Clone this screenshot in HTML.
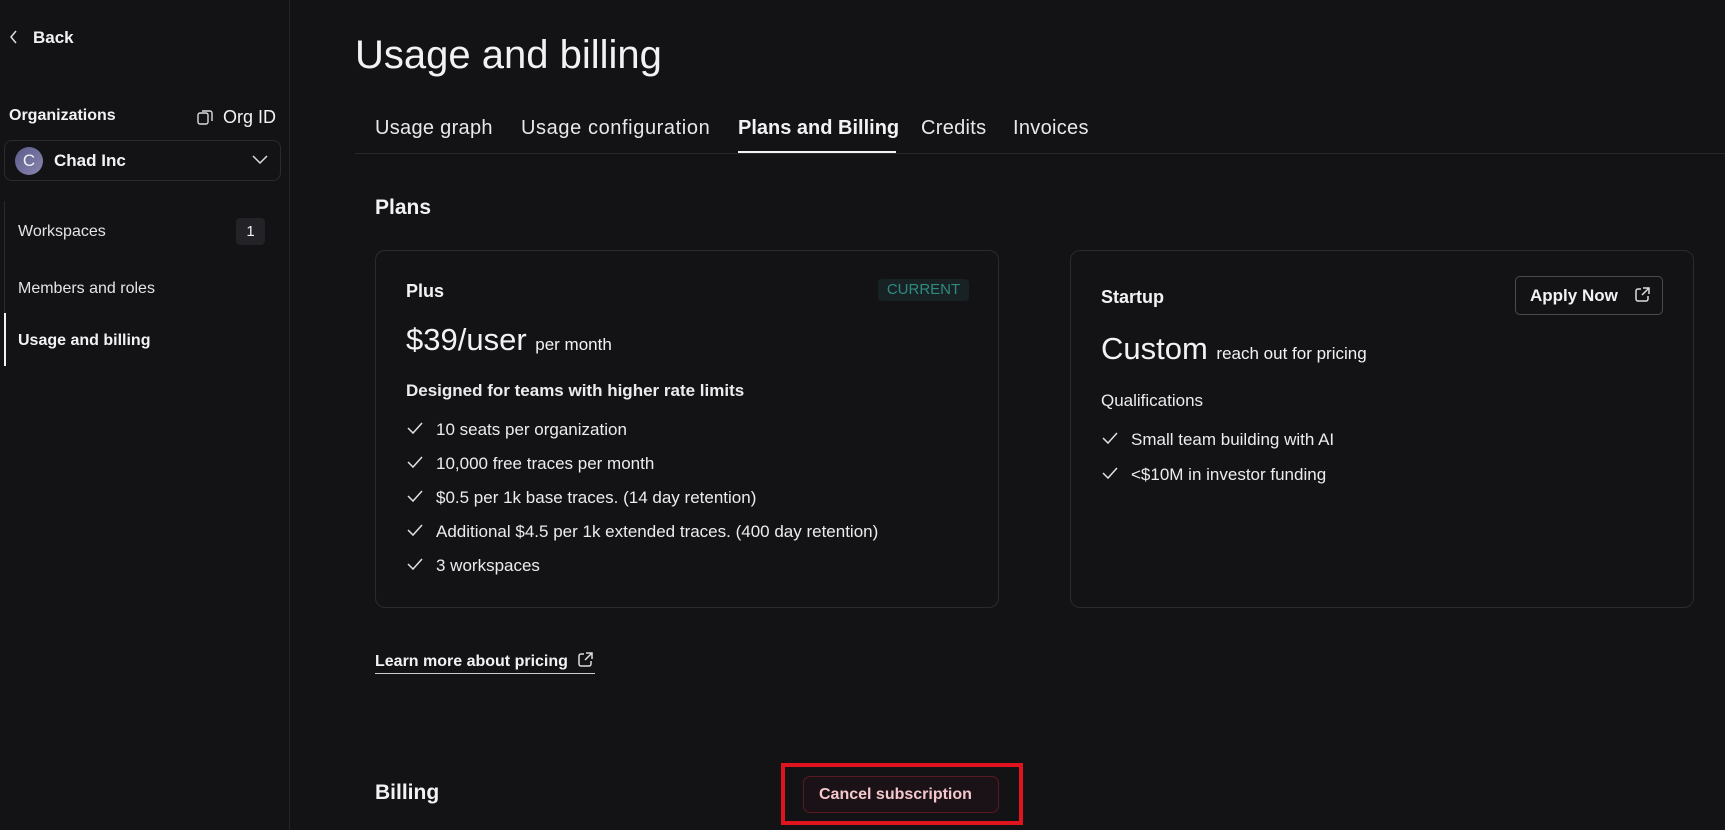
<!DOCTYPE html>
<html><head><meta charset="utf-8"><style>
*{box-sizing:border-box;margin:0;padding:0}
body{width:1725px;height:830px;background:#131316;color:#f2f2f3;font-family:"Liberation Sans",Arial,sans-serif;position:relative;overflow:hidden}
.a{position:absolute;white-space:nowrap}
.side{position:absolute;left:0;top:0;width:290px;height:830px;border-right:1px solid #25252a}
.card{position:absolute;border:1px solid #2a2a30;border-radius:10px;top:250px;height:358px}
.li{font-size:17px;color:#ececee}
.tab{font-size:20px;color:#e8e8ea;letter-spacing:0.3px}
</style></head><body>
<div class="side">
  <svg class="a" style="left:9px;top:30px" width="10" height="14" viewBox="0 0 10 14"><path d="M7 1L2 7l5 6" fill="none" stroke="#ddd" stroke-width="1.5"/></svg>
  <div class="a" style="left:33px;top:28px;font-size:17px;font-weight:bold">Back</div>
  <div class="a" style="left:9px;top:107px;font-size:16px;font-weight:bold">Organizations</div>
  <svg class="a" style="left:196px;top:108px" width="18" height="18" viewBox="0 0 18 18"><rect x="2" y="5" width="10" height="11" rx="2" fill="none" stroke="#ddd" stroke-width="1.4"/><path d="M6 3h8a2 2 0 0 1 2 2v8" fill="none" stroke="#ddd" stroke-width="1.4"/></svg>
  <div class="a" style="left:223px;top:107px;font-size:18px">Org ID</div>
  <div class="a" style="left:4px;top:140px;width:277px;height:41px;border:1px solid #2a2a30;border-radius:8px"></div>
  <div class="a" style="left:15px;top:147px;width:28px;height:28px;border-radius:50%;background:linear-gradient(135deg,#5a5a8a,#8a86b0);font-size:17px;text-align:center;line-height:28px">C</div>
  <div class="a" style="left:54px;top:151px;font-size:17px;font-weight:bold">Chad Inc</div>
  <svg class="a" style="left:252px;top:155px" width="16" height="10" viewBox="0 0 16 10"><path d="M1 1l7 7 7-7" fill="none" stroke="#ddd" stroke-width="1.5"/></svg>
  <div class="a" style="left:4px;top:201px;width:1px;height:165px;background:#2a2a30"></div>
  <div class="a" style="left:4px;top:313px;width:2px;height:53px;background:#f2f2f3"></div>
  <div class="a" style="left:18px;top:223px;font-size:16px;color:#e4e4e6">Workspaces</div>
  <div class="a" style="left:236px;top:218px;width:29px;height:27px;background:#232327;border-radius:4px;text-align:center;line-height:27px;font-size:15px">1</div>
  <div class="a" style="left:18px;top:280px;font-size:16px;color:#e4e4e6">Members and roles</div>
  <div class="a" style="left:18px;top:332px;font-size:16px;font-weight:bold">Usage and billing</div>
</div>
<div class="a" style="left:355px;top:33px;font-size:40px">Usage and billing</div>
<div class="a tab" style="left:375px;top:117px">Usage graph</div>
<div class="a tab" style="left:521px;top:117px;letter-spacing:0.6px">Usage configuration</div>
<div class="a" style="left:738px;top:117px;font-size:20px;font-weight:bold">Plans and Billing</div>
<div class="a tab" style="left:921px;top:117px">Credits</div>
<div class="a tab" style="left:1013px;top:117px">Invoices</div>
<div class="a" style="left:355px;top:153px;width:1370px;height:1px;background:#26262b"></div>
<div class="a" style="left:738px;top:151px;width:158px;height:2px;background:#f2f2f3"></div>
<div class="a" style="left:375px;top:196px;font-size:21px;font-weight:bold">Plans</div>

<div class="card" style="left:375px;width:624px"></div>
<div class="a" style="left:406px;top:281px;font-size:18px;font-weight:bold">Plus</div>
<div class="a" style="left:878px;top:279px;width:91px;height:22px;background:#182224;border-radius:4px;color:#2f8a80;font-size:15px;text-align:center;line-height:22px">CURRENT</div>
<div class="a" style="left:406px;top:322px;font-size:31px">$39/user <span style="font-size:17px">per month</span></div>
<div class="a" style="left:406px;top:381px;font-size:17px;font-weight:bold;color:#ececee">Designed for teams with higher rate limits</div>
<div class="a li" style="left:436px;top:420px">10 seats per organization</div>
<div class="a li" style="left:436px;top:454px">10,000 free traces per month</div>
<div class="a li" style="left:436px;top:488px">$0.5 per 1k base traces. (14 day retention)</div>
<div class="a li" style="left:436px;top:522px">Additional $4.5 per 1k extended traces. (400 day retention)</div>
<div class="a li" style="left:436px;top:556px">3 workspaces</div>

<div class="card" style="left:1070px;width:624px"></div>
<div class="a" style="left:1101px;top:287px;font-size:18px;font-weight:bold">Startup</div>
<div class="a" style="left:1515px;top:276px;width:148px;height:39px;border:1px solid #4a4a50;border-radius:5px"></div>
<div class="a" style="left:1530px;top:286px;font-size:17px;font-weight:bold">Apply Now</div>
<svg class="a" style="left:1634px;top:286px" width="17" height="17" viewBox="0 0 17 17"><path d="M7 3H4a2 2 0 0 0-2 2v8a2 2 0 0 0 2 2h8a2 2 0 0 0 2-2v-3M9 2h6v6M15 2L8 9" fill="none" stroke="#ddd" stroke-width="1.5"/></svg>
<div class="a" style="left:1101px;top:331px;font-size:31px">Custom <span style="font-size:17px">reach out for pricing</span></div>
<div class="a" style="left:1101px;top:391px;font-size:17px;color:#ececee">Qualifications</div>
<div class="a li" style="left:1131px;top:430px">Small team building with AI</div>
<div class="a li" style="left:1131px;top:465px">&lt;$10M in investor funding</div>

<svg class="a" style="left:0;top:0" width="1725" height="830">
<g fill="none" stroke="#e0e0e2" stroke-width="1.5">
<path d="M408 428l5 5 9-10"/><path d="M408 462l5 5 9-10"/><path d="M408 496l5 5 9-10"/><path d="M408 530l5 5 9-10"/><path d="M408 564l5 5 9-10"/>
<path d="M1103 438l5 5 9-10"/><path d="M1103 473l5 5 9-10"/>
</g></svg>

<div class="a" style="left:375px;top:653px;font-size:16px;font-weight:bold">Learn more about pricing</div>
<svg class="a" style="left:577px;top:651px" width="17" height="17" viewBox="0 0 17 17"><path d="M7 3H4a2 2 0 0 0-2 2v8a2 2 0 0 0 2 2h8a2 2 0 0 0 2-2v-3M9 2h6v6M15 2L8 9" fill="none" stroke="#ddd" stroke-width="1.5"/></svg>
<div class="a" style="left:375px;top:673px;width:220px;height:1px;background:#ccc"></div>

<div class="a" style="left:375px;top:781px;font-size:21px;font-weight:bold">Billing</div>
<div class="a" style="left:803px;top:776px;width:196px;height:37px;border:1px solid #5a1a22;border-radius:7px;background:#1a1216"></div>
<div class="a" style="left:819px;top:786px;font-size:16px;font-weight:bold;color:#f4c8cc">Cancel subscription</div>
<div class="a" style="left:781px;top:763px;width:242px;height:62px;border:4px solid #e0141e"></div>
</body></html>
